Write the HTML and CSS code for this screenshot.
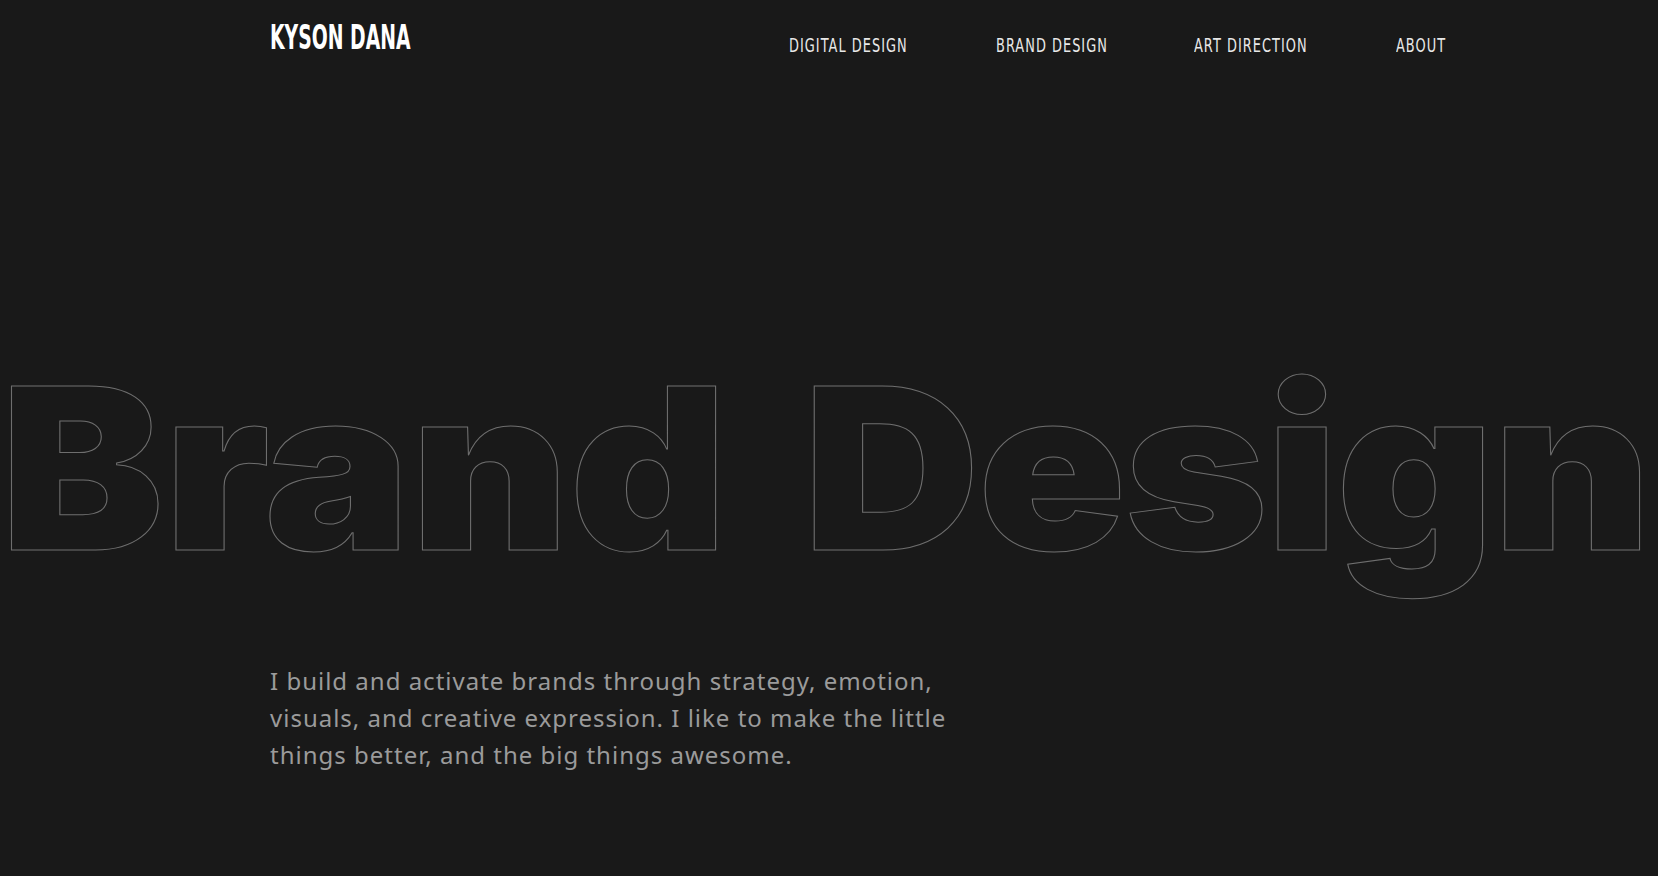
FILE: index.html
```html
<!DOCTYPE html>
<html lang="en">
<head>
<meta charset="utf-8">
<title>Kyson Dana</title>
<link rel="stylesheet" href="styles.css">
</head>
<body>
<header class="header">
  <div class="logo"><span class="logo-text">KYSON DANA</span></div>
  <nav class="nav">
    <a class="nav-link" href="#">DIGITAL DESIGN</a>
    <a class="nav-link" href="#">BRAND DESIGN</a>
    <a class="nav-link" href="#">ART DIRECTION</a>
    <a class="nav-link" href="#">ABOUT</a>
  </nav>
</header>
<main class="hero">
  <h1 class="hero-title">Brand <span class="hero-title-tight">Design</span></h1>
  <p class="hero-text">I build and activate brands through strategy, emotion, visuals, and creative expression. I like to make the little things better, and the big things awesome.</p>
</main>
</body>
</html>
```
FILE: styles.css
```css
html, body {
  margin: 0;
  padding: 0;
  background: #191919;
  height: 100%;
  overflow: hidden;
}
.header {
  display: flex;
  align-items: flex-start;
  padding: 18px 0 0 270px;
}
.logo {
  width: 519px;
  flex: none;
}
.logo-text {
  display: inline-block;
  font-family: "DejaVu Sans", sans-serif;
  font-weight: 700;
  font-size: 33px;
  line-height: 40px;
  color: #ffffff;
  transform: scaleX(0.57);
  transform-origin: left center;
  white-space: nowrap;
}
.nav {
  display: grid;
  grid-template-columns: 207px 198px 202px auto;
  padding-top: 15px;
}
.nav-link {
  display: inline-block;
  justify-self: start;
  font-family: "DejaVu Sans", sans-serif;
  font-size: 19px;
  line-height: 24px;
  color: #e8e8e8;
  text-decoration: none;
  letter-spacing: 1.5px;
  white-space: nowrap;
  transform: scaleX(0.68);
  transform-origin: left center;
}
.hero {
  padding-top: 298px;
}
.hero-title {
  margin: 0;
  font-family: Inter, "Liberation Sans", sans-serif;
  font-weight: 900;
  font-size: 225px;
  line-height: 1;
  color: transparent;
  -webkit-text-stroke: 1px #6e6e6e;
  white-space: nowrap;
  word-spacing: 24px;
  transform: scaleX(1.09);
  transform-origin: left center;
}
.hero-title-tight {
  letter-spacing: -2.2px;
}
.hero-text {
  margin: 81px 0 0 270px;
  width: 700px;
  font-family: "Noto Sans", sans-serif;
  font-size: 24px;
  line-height: 37px;
  letter-spacing: 1px;
  color: #9b9b9b;
}
```
